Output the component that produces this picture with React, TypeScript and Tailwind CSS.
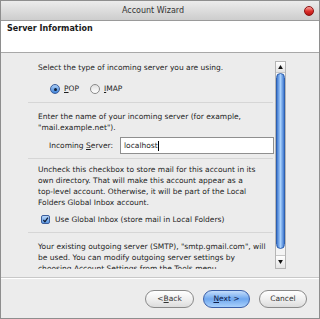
import React from "react";

const font = { fontFamily: '"DejaVu Sans", "Liberation Sans", sans-serif' };

const Separator = () => <div className="h-px bg-[#d6d6d6] ml-[27px] mr-[2px]" />;

const PillButton = ({
  children,
  primary,
  className = "",
}: {
  children: React.ReactNode;
  primary?: boolean;
  className?: string;
}) => (
  <button
    className={
      "h-[18px] rounded-full border text-[7.5px] flex items-center justify-center " +
      (primary
        ? "border-[#3b5fa8] bg-gradient-to-b from-[#c4ddfb] via-[#6fa7ee] to-[#a9d0fb] text-[#10204a] "
        : "border-[#8a8a8a] bg-gradient-to-b from-white via-[#f0f0f0] to-[#dcdcdc] text-[#333] ") +
      className
    }
  >
    {children}
  </button>
);

export default function App() {
  return (
    <div
      className="w-[320px] h-[319px] bg-[#ececec] border border-[#8e8e8e] flex flex-col overflow-hidden text-[#1e1e1e]"
      style={font}
    >
      {/* Title bar */}
      <div className="h-[20px] shrink-0 bg-gradient-to-b from-[#ececec] to-[#cdcdcd] border-b border-[#9a9a9a] flex items-center relative">
        <span className="flex-1 text-center text-[8px] text-[#333] pr-[14px]">Account Wizard</span>
        <span className="absolute right-[5px] top-[5px] w-[10px] h-[10px] rounded-full bg-gradient-to-b from-[#f6a3a3] via-[#e0302e] to-[#b3140f] border border-[#8c1010]" />
      </div>

      {/* Header */}
      <div className="h-[32px] shrink-0 bg-white border-b border-[#a8a8a8] px-[6px] pt-[3px]">
        <div className="text-[8px] leading-[10px] font-bold text-[#1a1a1a]">Server Information</div>
      </div>

      {/* Body */}
      <div className="h-[225px] shrink-0 flex border-b border-[#c8c8c8]">
        <div className="flex-1 h-[216px] overflow-hidden pt-[9px]">
          <div className="pl-[37px] text-[7.5px] leading-[11px]">
            Select the type of incoming server you are using.
          </div>
          <div className="pl-[49px] mt-[10px] h-[12px] flex items-center text-[7.5px]">
            <span className="w-[10px] h-[10px] rounded-full border border-[#3c5e9c] bg-gradient-to-b from-[#a9cdf6] to-[#3e83d8] flex items-center justify-center">
              <span className="w-[3px] h-[3px] rounded-full bg-[#10203a]" />
            </span>
            <span className="ml-[4px]">
              <u>P</u>OP
            </span>
            <span className="ml-[11px] w-[10px] h-[10px] rounded-full border border-[#8a8a8a] bg-gradient-to-b from-[#e0e0e0] to-white" />
            <span className="ml-[4px]">
              <u>I</u>MAP
            </span>
          </div>
          <div className="mt-[7px]">
            <Separator />
          </div>
          <div className="pl-[37px] pr-[4px] mt-[8px] text-[7.5px] leading-[11px]">
            Enter the name of your incoming server (for example,
            <br />
            "mail.example.net").
          </div>
          <div className="mt-[4px] flex items-center">
            <span className="w-[112px] text-right text-[7.5px]">
              Incoming <u>S</u>erver:
            </span>
            <div className="ml-[7px] w-[154px] h-[17px] bg-white border border-[#8f8f8f] flex items-center px-[3px] text-[7.5px]">
              localhost
              <span className="w-px h-[10px] bg-black" />
            </div>
          </div>
          <div className="mt-[4px]">
            <Separator />
          </div>
          <div className="pl-[37px] pr-[4px] mt-[5px] text-[7.5px] leading-[11px]">
            Uncheck this checkbox to store mail for this account in its
            <br />
            own directory. That will make this account appear as a
            <br />
            top-level account. Otherwise, it will be part of the Local
            <br />
            Folders Global Inbox account.
          </div>
          <div className="pl-[40px] mt-[6px] h-[11px] flex items-center text-[7.5px]">
            <span className="w-[9px] h-[9px] rounded-[2px] border border-[#3c5e9c] bg-gradient-to-b from-[#b8d6f8] to-[#5b97e0] flex items-center justify-center">
              <svg viewBox="0 0 10 10" className="w-[8px] h-[8px]">
                <path d="M2 5 L4.2 7.6 L8.4 1.6" stroke="#0d1a33" strokeWidth="1.8" fill="none" />
              </svg>
            </span>
            <span className="ml-[5px]">Use Global Inbox (store mail in Local Folders)</span>
          </div>
          <div className="mt-[7px]">
            <Separator />
          </div>
          <div className="pl-[37px] pr-[4px] mt-[8px] text-[7.5px] leading-[11px]">
            Your existing outgoing server (SMTP), "smtp.gmail.com", will
            <br />
            be used. You can modify outgoing server settings by
            <br />
            choosing Account Settings from the Tools menu.
          </div>
        </div>

        {/* Scrollbar */}
        <div className="w-[11px] mr-[33px] mt-[8px] h-[208px] flex flex-col border border-[#b5b5b5] bg-white">
          <div className="h-[11px] border-b border-[#c8c8c8] bg-gradient-to-b from-white to-[#e4e4e4] flex items-center justify-center">
            <svg viewBox="0 0 6 5" className="w-[5px] h-[4px]">
              <path d="M3 0 L6 5 L0 5 Z" fill="#111" />
            </svg>
          </div>
          <div className="flex-1 bg-[#f4f4f4]">
            <div className="h-[176px] rounded-full bg-gradient-to-r from-[#3f78d0] via-[#a8d0fb] to-[#3f78d0] border border-[#2d5fae]" />
          </div>
          <div className="h-[13px] border-t border-[#c8c8c8] bg-gradient-to-b from-white to-[#e4e4e4] flex items-center justify-center">
            <svg viewBox="0 0 6 5" className="w-[5px] h-[4px]">
              <path d="M0 0 L6 0 L3 5 Z" fill="#111" />
            </svg>
          </div>
        </div>
      </div>

      {/* Footer */}
      <div className="flex-1 flex items-start justify-end gap-[9px] pr-[12px] pt-[11px] border-t border-white">
        <PillButton className="w-[49px]">
          &lt; <u>B</u>ack
        </PillButton>
        <PillButton primary className="w-[47px]">
          <u>N</u>ext &gt;
        </PillButton>
        <PillButton className="w-[48px]">Cancel</PillButton>
      </div>
    </div>
  );
}
